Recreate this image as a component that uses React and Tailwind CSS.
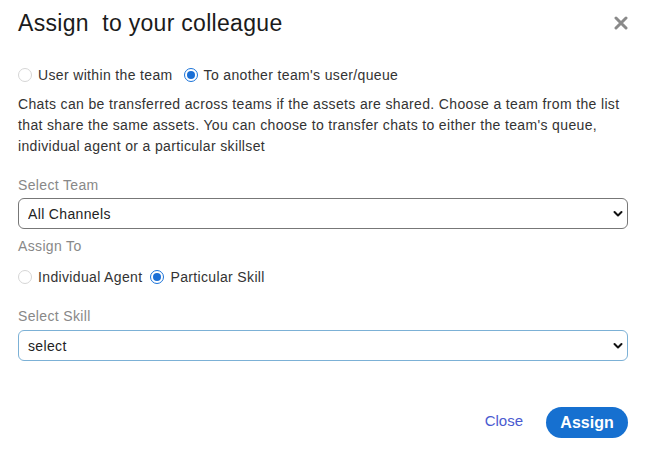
import React, { useState } from "react";

function Radio({ checked, label, onChange }) {
  return (
    <label className="flex items-center cursor-pointer" onClick={onChange}>
      <span
        className={`w-[14px] h-[14px] rounded-full flex items-center justify-center ${
          checked ? "border-[1.5px] border-[#1a73d9]" : "border border-[#d6d6d6]"
        }`}
      >
        {checked && <span className="w-[8px] h-[8px] rounded-full bg-[#1a6fd6]" />}
      </span>
      <span className="ml-[6px]">{label}</span>
    </label>
  );
}

function Chevron() {
  return (
    <svg width="10" height="7" viewBox="0 0 10 7" className="absolute right-[5px] top-1/2 -translate-y-1/2 pointer-events-none">
      <path d="M1.5 1.5 L5 5 L8.5 1.5" fill="none" stroke="#111" strokeWidth="2" strokeLinecap="round" strokeLinejoin="round" />
    </svg>
  );
}

function Select({ value, options, borderClass }) {
  return (
    <div className="relative">
      <select
        defaultValue={value}
        className={`w-full h-[31px] appearance-none rounded-[6px] border bg-white pl-[9px] text-[14px] text-[#222] outline-none ${borderClass}`}
      >
        {options.map((o) => (
          <option key={o}>{o}</option>
        ))}
      </select>
      <Chevron />
    </div>
  );
}

export default function App() {
  const [mode, setMode] = useState("other");
  const [target, setTarget] = useState("skill");

  return (
    <div className="w-[648px] h-[455px] bg-white pl-[18px] pr-[20px] text-[14px] tracking-[0.35px] text-[#333] font-['Liberation_Sans',Arial,sans-serif] leading-[20px]">
      <div className="flex items-start justify-between pt-[9px]">
        <h1 className="text-[23px] leading-[28px] tracking-[0.3px] text-[#1b1b1b] whitespace-pre">Assign  to your colleague</h1>
        <svg width="14" height="14" viewBox="0 0 14 14" className="mt-[7px]">
          <path d="M2 2 L12 12 M12 2 L2 12" stroke="#8a8a8a" strokeWidth="3" strokeLinecap="round" />
        </svg>
      </div>

      <div className="flex items-center gap-[11px] mt-[28px]">
        <Radio checked={mode === "team"} label="User within the team" onChange={() => setMode("team")} />
        <Radio checked={mode === "other"} label="To another team's user/queue" onChange={() => setMode("other")} />
      </div>

      <p className="mt-[9px] leading-[21px]">
        Chats can be transferred across teams if the assets are shared. Choose a team from the list that share the same assets. You can choose to transfer chats to either the team's queue, individual agent or a particular skillset
      </p>

      <div className="mt-[18px] text-[#888]">Select Team</div>
      <div className="mt-[3px]">
        <Select value="All Channels" options={["All Channels"]} borderClass="border-[#777]" />
      </div>

      <div className="mt-[7px] text-[#888]">Assign To</div>
      <div className="flex items-center gap-[8px] mt-[11px]">
        <Radio checked={target === "agent"} label="Individual Agent" onChange={() => setTarget("agent")} />
        <Radio checked={target === "skill"} label="Particular Skill" onChange={() => setTarget("skill")} />
      </div>

      <div className="mt-[19px] text-[#888]">Select Skill</div>
      <div className="mt-[4px]">
        <Select value="select" options={["select"]} borderClass="border-[#7cb1d6]" />
      </div>

      <div className="flex items-center justify-end mt-[46px]">
        <button className="text-[15px] tracking-normal text-[#4a5ad0] mr-[23px] -mt-[3px]">Close</button>
        <button className="h-[31px] w-[82px] rounded-full bg-[#1670d0] text-white text-[16px] tracking-normal font-semibold">Assign</button>
      </div>
    </div>
  );
}
